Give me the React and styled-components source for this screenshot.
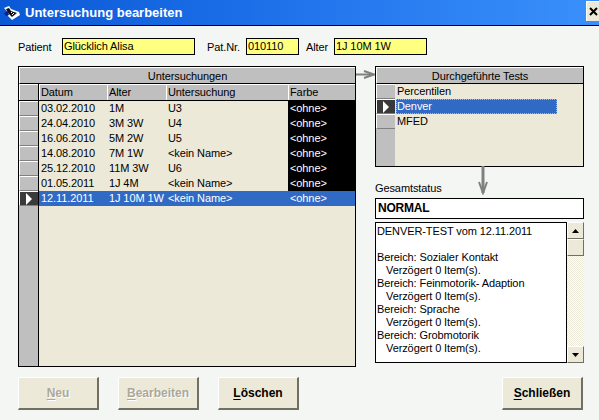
import React from "react";
import styled, { createGlobalStyle } from "styled-components";

const Global = createGlobalStyle`
  html, body { margin: 0; padding: 0; background: #f3f6f3; }
  * { box-sizing: border-box; }
`;

const Win = styled.div`
  width: 599px; height: 420px; overflow: hidden; background: #f3f6f3;
  font-family: "Liberation Sans", Arial, sans-serif; font-size: 11px; letter-spacing: -0.1px; color: #000;
  display: flex; flex-direction: column;
`;
const TitleBar = styled.div`
  height: 26px; flex: none; border-bottom: 1px solid #000;
  background: linear-gradient(90deg, #0a58d6 0%, #1c6ee8 40%, #3a90fb 100%);
  display: flex; align-items: center; padding: 0 0 0 3px; color: #fff;
`;
const TitleText = styled.div`
  font-family: "Liberation Sans", sans-serif; font-weight: 700; font-size: 13px; margin-left: 4px; letter-spacing: 0; flex: 1;
`;
const CloseBtn = styled.div`
  width: 13px; height: 20px; margin-bottom: 3px; background: #ece9d8; border-top: 1px solid #fff; border-left: 1px solid #fff;
  display: flex; align-items: center; justify-content: center;
`;
const Body = styled.div`
  flex: 1; padding: 12px 16px 0 18px; display: flex; flex-direction: column;
`;
const PatientRow = styled.div`
  display: flex; align-items: center; height: 17px;
`;
const Label = styled.span`
  white-space: nowrap; width: ${p => p.$w}px; flex: none;
`;
const YellowField = styled.div`
  width: ${p => p.$w}px; height: 17px; flex: none; background: #ffff80; border: 1px solid #000;
  padding-left: 1px; line-height: 15px; margin-right: ${p => p.$mr}px; white-space: nowrap;
`;
const Main = styled.div`
  display: flex; margin-top: 11px; height: 301px;
`;
const Table = styled.div`
  width: 338px; height: 301px; flex: none; border: 1px solid #000; background: #ece9d8;
  display: flex; flex-direction: column;
`;
const GroupHead = styled.div`
  height: 17px; flex: none; background: #bfbfbf; text-align: center; line-height: 16px;
  border-top: 1px solid #fff; border-bottom: 1px solid #000; border-left: 1px solid #fff;
`;
const grid = "19px 1px 68px 59px 122px 1fr";
const ColHead = styled.div`
  display: grid; grid-template-columns: ${grid}; height: 17px; flex: none; background: #bfbfbf; border-bottom: 1px solid #000;
`;
const HeadCell = styled.div`
  padding-left: 1px; line-height: 15px; border-left: 1px solid #fff; border-top: 1px solid #fff; white-space: nowrap;
`;
const Divider = styled.div` background: #000; `;
const RowWrap = styled.div`
  display: grid; grid-template-columns: ${grid}; height: 15px; flex: none; line-height: 15px;
  background: ${p => (p.$sel ? "#316ac5" : "transparent")}; color: ${p => (p.$sel ? "#fff" : "#000")};
`;
const Cell = styled.div`
  padding-left: 2px; white-space: nowrap; overflow: hidden;
`;
const FarbeCell = styled(Cell)`
  background: ${p => (p.$sel ? "#316ac5" : "#000")}; color: #fff; padding-left: 2px;
`;
const Indicator = styled.div`
  background: ${p => (p.$sel ? "#3a3a3a" : "#bfbfbf")};
  border-top: 1px solid #fff; border-left: 1px solid #fff; border-bottom: 1px solid #808080;
  display: flex; align-items: center; justify-content: center; height: 15px;
`;
const FillRow = styled.div`
  flex: 1; display: grid; grid-template-columns: ${grid};
`;
const FillGutter = styled.div` background: #bfbfbf; `;
const Gap = styled.div`
  width: 19px; flex: none; display: flex; align-items: flex-start; padding-top: 4px;
`;
const Right = styled.div`
  width: 209px; flex: none; display: flex; flex-direction: column; position: relative;
`;
const TestsPanel = styled.div`
  height: 101px; flex: none; border: 1px solid #000; background: #ece9d8; display: flex; flex-direction: column;
`;
const testGrid = "19px 1px 161px 1fr";
const TestRow = styled.div`
  display: grid; grid-template-columns: ${testGrid}; height: 15px; line-height: 15px; flex: none;
`;
const TestName = styled.div`
  padding-left: 1px;
  background: ${p => (p.$sel ? "#316ac5" : "transparent")}; color: ${p => (p.$sel ? "#fff" : "#000")};
  outline: ${p => (p.$sel ? "1px dotted #9db9e6" : "none")}; outline-offset: -1px;
`;
const TestFill = styled.div`
  flex: 1; display: grid; grid-template-columns: 19px 1fr;
`;
const StatusLabel = styled.div`
  height: 31px; flex: none; display: flex; align-items: flex-end; padding-bottom: 3px; line-height: 13px;
`;
const DownArrow = styled.svg`
  position: absolute; left: 103px; top: 100px;
`;
const StatusBox = styled.div`
  height: 21px; flex: none; border: 1px solid #000; background: #fff; font-weight: 700; font-size: 12px;
  padding-left: 2px; line-height: 18px; letter-spacing: -0.2px;
`;
const ReportWrap = styled.div`
  display: flex; margin-top: 3px; height: 11px; flex: 1; max-height: 141px;
`;
const Report = styled.div`
  width: 192px; flex: none; border: 1px solid #000; background: #fff; padding: 2px 1px; overflow: hidden;
`;
const Line = styled.div`
  height: 13px; line-height: 13px; white-space: nowrap; padding-left: ${p => (p.$in ? 9 : 0)}px;
`;
const ScrollBar = styled.div`
  width: 17px; flex: none; display: flex; flex-direction: column;
  background: repeating-conic-gradient(#ece9d8 0 25%, #fff 0 50%) 0 0 / 2px 2px;
`;
const ScrollBtn = styled.div`
  width: 17px; height: 17px; flex: none; background: #ece9d8; display: flex; align-items: center; justify-content: center;
  border-top: 1px solid #fff; border-left: 1px solid #fff; border-right: 1px solid #716f64; border-bottom: 1px solid #716f64;
`;
const Spacer = styled.div` flex: 1; `;
const Footer = styled.div`
  display: flex; margin-top: 10px; gap: 19px;
`;
const Btn = styled.div`
  width: 81px; height: 33px; flex: none; background: #ece9d8;
  border-top: 1px solid #fff; border-left: 1px solid #fff; border-right: 2px solid #716f64; border-bottom: 2px solid #716f64;
  display: flex; align-items: center; justify-content: center;
  font-weight: 700; font-size: 12px; letter-spacing: 0;
  color: ${p => (p.$off ? "#aca899" : "#000")};
  text-shadow: ${p => (p.$off ? "1px 1px 0 #fff" : "none")};
  margin-left: ${p => (p.$push ? "auto" : "0")};
  u { text-underline-offset: 2px; }
`;

const Tri = ({ c = "#fff" }) => (
  <svg width="8" height="12" viewBox="0 0 8 12"><path d="M1 0 L7 6 L1 12 Z" fill={c} /></svg>
);

const rows = [
  ["03.02.2010", "1M", "U3"],
  ["24.04.2010", "3M 3W", "U4"],
  ["16.06.2010", "5M 2W", "U5"],
  ["14.08.2010", "7M 1W", "<kein Name>"],
  ["25.12.2010", "11M 3W", "U6"],
  ["01.05.2011", "1J 4M", "<kein Name>"],
  ["12.11.2011", "1J 10M 1W", "<kein Name>"],
];
const tests = ["Percentilen", "Denver", "MFED"];
const report = [
  ["DENVER-TEST vom 12.11.2011"], [""],
  ["Bereich: Sozialer Kontakt"], ["Verzögert 0 Item(s).", 1],
  ["Bereich: Feinmotorik- Adaption"], ["Verzögert 0 Item(s).", 1],
  ["Bereich: Sprache"], ["Verzögert 0 Item(s).", 1],
  ["Bereich: Grobmotorik"], ["Verzögert 0 Item(s).", 1],
];

export default function App() {
  return (
    <Win>
      <Global />
      <TitleBar>
        <svg width="18" height="16" viewBox="0 0 18 16">
          <path d="M1 3 L6 1 L8 4 L16 7 L17 10 L9 15 L5 11 L4 6 Z" fill="#fff" />
          <path d="M1 8 L5 6 L6 10 L3 11 Z" fill="#0a1f8a" />
          <path d="M3 4 L6 3 L8 6 L14 8 L9 12 L6 9 Z" fill="#111" />
          <path d="M8 7h1v1h-1zM10 8h1v1h-1zM9 9h1v1h-1z" fill="#fff" />
        </svg>
        <TitleText>Untersuchung bearbeiten</TitleText>
        <CloseBtn>
          <svg width="9" height="9" viewBox="0 0 9 9"><path d="M1 1 L8 8 M8 1 L1 8" stroke="#000" strokeWidth="2" /></svg>
        </CloseBtn>
      </TitleBar>
      <Body>
        <PatientRow>
          <Label $w={44}>Patient</Label>
          <YellowField $w={133} $mr={12}>Glücklich Alisa</YellowField>
          <Label $w={39}>Pat.Nr.</Label>
          <YellowField $w={53} $mr={7}>010110</YellowField>
          <Label $w={28}>Alter</Label>
          <YellowField $w={93} $mr={0}>1J 10M 1W</YellowField>
        </PatientRow>
        <Main>
          <Table>
            <GroupHead>Untersuchungen</GroupHead>
            <ColHead>
              <HeadCell />
              <Divider />
              <HeadCell>Datum</HeadCell>
              <HeadCell>Alter</HeadCell>
              <HeadCell>Untersuchung</HeadCell>
              <HeadCell>Farbe</HeadCell>
            </ColHead>
            {rows.map((r, i) => {
              const sel = i === rows.length - 1;
              return (
                <RowWrap key={r[0]} $sel={sel}>
                  <Indicator $sel={sel}>{sel && <Tri />}</Indicator>
                  <Divider />
                  <Cell>{r[0]}</Cell>
                  <Cell>{r[1]}</Cell>
                  <Cell>{r[2]}</Cell>
                  <FarbeCell $sel={sel}>&lt;ohne&gt;</FarbeCell>
                </RowWrap>
              );
            })}
            <FillRow>
              <FillGutter />
              <Divider />
            </FillRow>
          </Table>
          <Gap>
            <svg width="19" height="9" viewBox="0 0 19 9">
              <path d="M0 4.5 H17" stroke="#808080" strokeWidth="2" fill="none" />
              <path d="M8 1 L18 4.5 L8 8" stroke="#808080" strokeWidth="2" fill="none" />
            </svg>
          </Gap>
          <Right>
            <TestsPanel>
              <GroupHead>Durchgeführte Tests</GroupHead>
              {tests.map((t, i) => (
                <TestRow key={t}>
                  <Indicator $sel={i === 1}>{i === 1 && <Tri />}</Indicator>
                  <div />
                  <TestName $sel={i === 1}>{t}</TestName>
                </TestRow>
              ))}
              <TestFill><FillGutter /></TestFill>
            </TestsPanel>
            <DownArrow width="10" height="29" viewBox="0 0 10 29">
              <path d="M5 0 V27" stroke="#808080" strokeWidth="3" fill="none" />
              <path d="M1 16 L5 27 L9 16" stroke="#808080" strokeWidth="2" fill="none" />
            </DownArrow>
            <StatusLabel>Gesamtstatus</StatusLabel>
            <StatusBox>NORMAL</StatusBox>
            <ReportWrap>
              <Report>
                {report.map((l, i) => <Line key={i} $in={l[1]}>{l[0]}</Line>)}
              </Report>
              <ScrollBar>
                <ScrollBtn>
                  <svg width="7" height="4" viewBox="0 0 7 4"><path d="M3.5 0 L7 4 H0 Z" fill="#000" /></svg>
                </ScrollBtn>
                <ScrollBtn />
                <Spacer />
                <ScrollBtn>
                  <svg width="7" height="4" viewBox="0 0 7 4"><path d="M0 0 H7 L3.5 4 Z" fill="#000" /></svg>
                </ScrollBtn>
              </ScrollBar>
            </ReportWrap>
          </Right>
        </Main>
        <Footer>
          <Btn $off><span><u>N</u>eu</span></Btn>
          <Btn $off><span><u>B</u>earbeiten</span></Btn>
          <Btn><span><u>L</u>öschen</span></Btn>
          <Btn $push><span><u>S</u>chließen</span></Btn>
        </Footer>
      </Body>
    </Win>
  );
}
